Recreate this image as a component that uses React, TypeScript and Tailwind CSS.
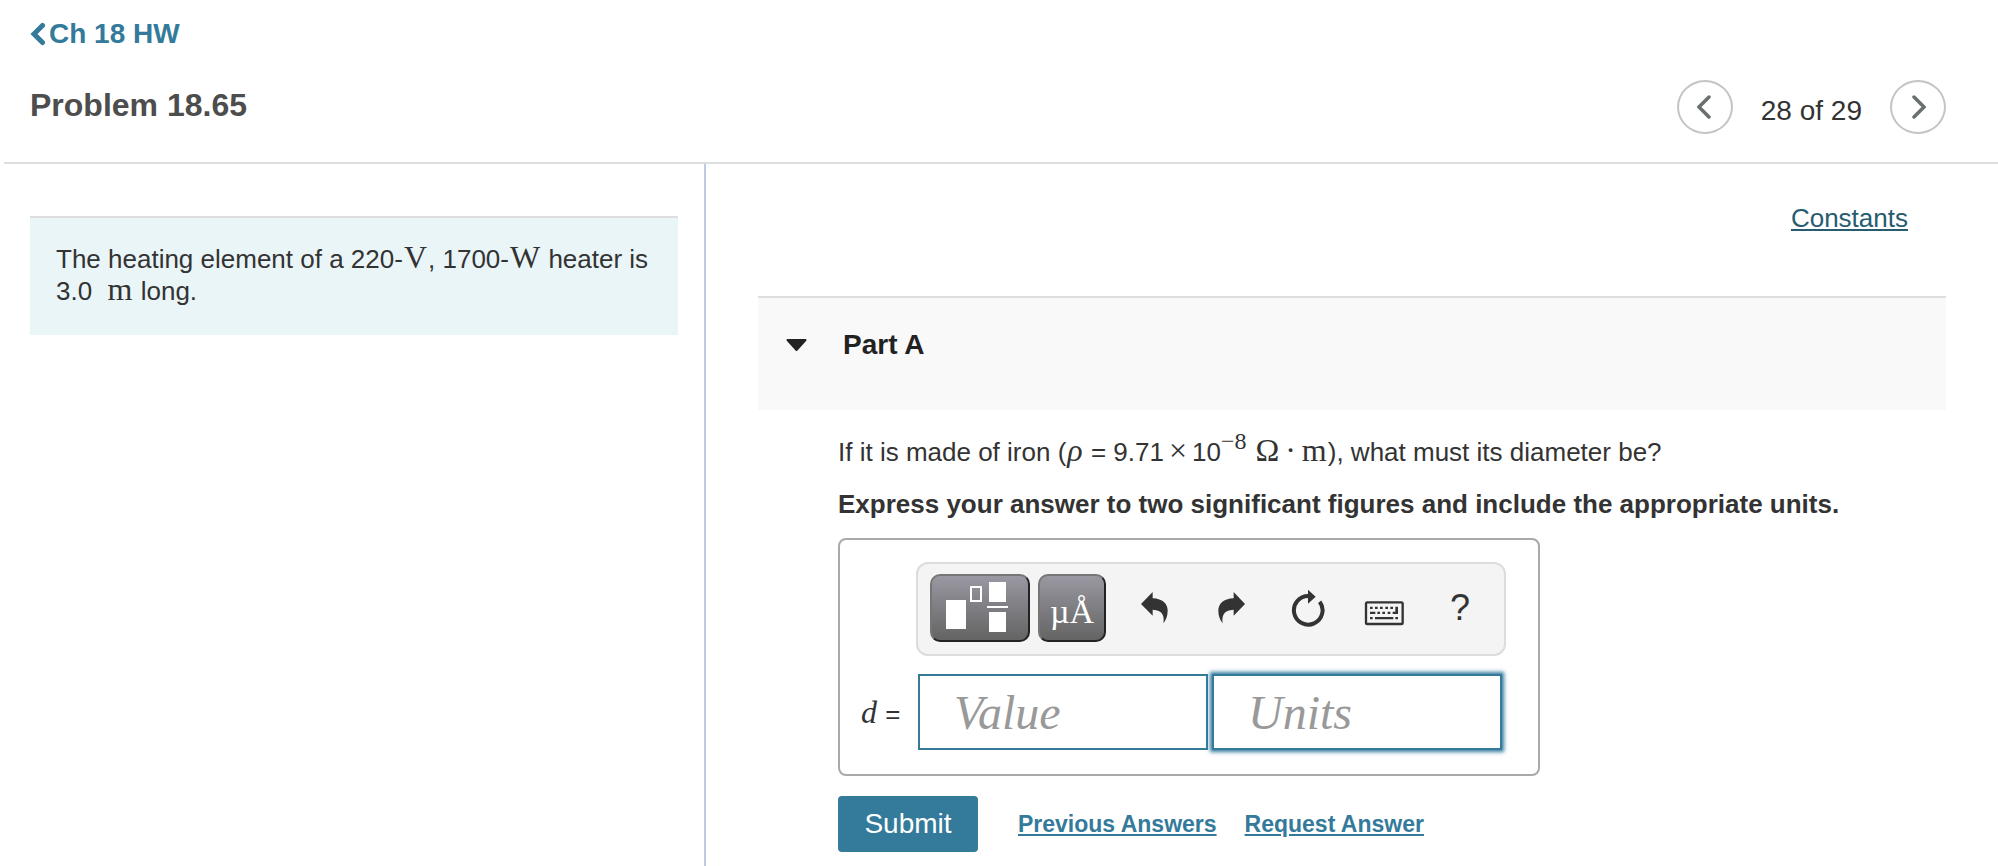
import type { ReactNode } from "react";

const Tex = ({ children }: { children: ReactNode }) => (
  <span className="mx-px font-['Liberation_Serif',serif] text-[32px] leading-[0]">{children}</span>
);

const ToolButton = ({ label, children }: { label: string; children: ReactNode }) => (
  <button type="button" aria-label={label} className="flex h-[68px] w-[76px] items-center justify-center text-[#333]">
    {children}
  </button>
);

const UndoIcon = () => (
  <svg viewBox="0 0 132 120" className="h-10 w-11" fill="currentColor">
    <path d="M27 48 62 12V31C92 32 107 48 107 68C107 84 102 95 94 106C98 84 92 66 62 65V83Z" />
  </svg>
);

const RedoIcon = () => (
  <svg viewBox="0 0 132 120" className="h-10 w-11" fill="currentColor">
    <path d="M111 48 77 12V31C46 32 31 48 31 68C31 84 36 95 44 106C41 84 46 66 77 65V83Z" />
  </svg>
);

const ResetIcon = () => (
  <svg viewBox="0 0 132 120" className="h-10 w-11">
    <path d="M74 24A43 43 0 1 0 107 41" fill="none" stroke="currentColor" strokeWidth="12" />
    <path d="M72 5 95 26 72 47Z" fill="currentColor" />
  </svg>
);

const KeyboardIcon = () => (
  <svg viewBox="0 0 132 120" className="h-10 w-11" fill="currentColor">
    <rect x="18" y="43" width="110" height="65" rx="4" fill="none" stroke="currentColor" strokeWidth="7" />
    <path d="M30 56h8v7h-8zM45 56h8v7h-8zM60 56h8v7h-8zM76 56h8v7h-8zM91 56h8v7h-8z" />
    <path d="M106 56h8v22h-16v-7h8z" />
    <path d="M30 71h16v7h-16zM52 71h8v7h-8zM67 71h8v7h-8zM83 71h8v7h-8z" />
    <path d="M30 87h8v7h-8zM45 87h55v7h-55zM106 87h8v7h-8z" />
  </svg>
);

const Header = () => (
  <header className="ml-1 flex items-end justify-between border-b-2 border-[#dedede] pt-4 pr-[52px] pb-7 pl-[26px]">
    <div className="pb-2">
      <a href="#hw" className="flex items-center gap-1 text-[28px] leading-9 font-bold text-[#337a9b]">
        <svg viewBox="0 0 15 24" className="h-6 w-[15px]" fill="none" stroke="currentColor" strokeWidth="5" strokeLinecap="round">
          <path d="M12.500 3.500 4 12 12.500 20.500" />
        </svg>
        Ch 18 HW
      </a>
      <h1 className="mt-8 text-[32px] leading-[42px] font-bold text-[#4d4d4d]">Problem 18.65</h1>
    </div>
    <nav className="flex items-center gap-7">
      <button
        type="button"
        aria-label="Previous item"
        className="flex h-[54px] w-14 items-center justify-center rounded-[50%] border-2 border-[#c4c4c4] pr-0.5 text-[#6a706e]"
      >
        <svg viewBox="0 0 14 24" className="h-6 w-3.5" fill="none" stroke="currentColor" strokeWidth="3.500" strokeLinecap="round">
          <path d="M12 2 2 12 12 22" />
        </svg>
      </button>
      <span className="pt-2 text-[28px] leading-9 text-[#333]">28 of 29</span>
      <button
        type="button"
        aria-label="Next item"
        className="flex h-[54px] w-14 items-center justify-center rounded-[50%] border-2 border-[#c4c4c4] pl-0.5 text-[#6a706e]"
      >
        <svg viewBox="0 0 14 24" className="h-6 w-3.5" fill="none" stroke="currentColor" strokeWidth="3.500" strokeLinecap="round">
          <path d="M2 2 12 12 2 22" />
        </svg>
      </button>
    </nav>
  </header>
);

const Toolbar = () => (
  <div className="ml-[76px] flex rounded-xl border-2 border-[#dcdcdc] bg-[#f4f4f4] pt-2.5 pb-3 pl-3">
    <button
      type="button"
      aria-label="Templates"
      className="h-[68px] w-[100px] rounded-[10px] border-2 border-t-[#767676] border-r-[#222] border-b-[#222] border-l-[#767676] bg-linear-to-b from-[#9a98a2] to-[#646464]"
    >
      <svg viewBox="2 2 96 64" className="h-16 w-24" fill="white">
        <rect x="16" y="26" width="20" height="29" />
        <rect x="41" y="13" width="10" height="14" fill="none" stroke="white" strokeWidth="2" />
        <rect x="59" y="8" width="17" height="20" />
        <rect x="57" y="32" width="21" height="2" />
        <rect x="59" y="38" width="17" height="20" />
      </svg>
    </button>
    <button
      type="button"
      aria-label="Units and symbols"
      className="ml-2 h-[68px] w-[68px] rounded-[10px] border-2 border-t-[#767676] border-r-[#222] border-b-[#222] border-l-[#767676] bg-linear-to-b from-[#9a98a2] to-[#646464] pt-2 font-['Liberation_Serif',serif] text-[34px] leading-none text-white"
    >
      µÅ
    </button>
    <div className="ml-2.5 flex">
      <ToolButton label="Undo"><UndoIcon /></ToolButton>
      <ToolButton label="Redo"><RedoIcon /></ToolButton>
      <ToolButton label="Reset"><ResetIcon /></ToolButton>
      <ToolButton label="Keyboard shortcuts"><KeyboardIcon /></ToolButton>
      <ToolButton label="Help"><span className="pl-1 text-[36px] leading-none">?</span></ToolButton>
    </div>
  </div>
);

const AnswerBox = () => (
  <div className="mt-4 w-[702px] max-w-full rounded-lg border-2 border-[#a9a9a9] pt-[22px] pr-8 pb-6">
    <Toolbar />
    <div className="mt-[18px] flex items-center">
      <label htmlFor="value" className="w-[78px] pt-1 pl-[21px] text-[26px] text-[#333]">
        <i className="mr-px font-['Liberation_Serif',serif] text-[32px] leading-none">d</i> =
      </label>
      <input
        id="value"
        placeholder="Value"
        className="h-[76px] w-[290px] border-2 border-[#337a9b] pl-[34px] font-['Liberation_Serif',serif] text-[48px] italic outline-none placeholder:text-[#999]"
      />
      <input
        aria-label="Units"
        placeholder="Units"
        className="ml-1 h-[76px] w-[290px] border-2 border-[#337a9b] pl-[34px] font-['Liberation_Serif',serif] text-[48px] italic shadow-[0_0_4px_2px_#337a9b] outline-none placeholder:text-[#999]"
      />
    </div>
  </div>
);

const PartA = () => (
  <section>
    <h2 className="flex h-[114px] items-start border-t-2 border-[#dedede] bg-[#f9f9f9] pt-7 pl-7 text-[28px] leading-[38px] font-bold text-[#222]">
      <button type="button" aria-expanded="true" className="flex items-center gap-9">
        <svg viewBox="0 0 21 12" className="h-3 w-[21px]" fill="currentColor">
          <path d="M1 0H20Q21 1 20 2L11.500 11.500Q10.500 12.500 9.500 11.500L1 2Q0 1 1 0Z" />
        </svg>
        Part A
      </button>
    </h2>
    <div className="pl-20 text-[26px] leading-9 text-[#333]">
      <p className="mt-6">
        If it is made of iron (<Tex><i>ρ</i></Tex> = 9.71
        <span className="mx-1"><Tex>×</Tex></span>10
        <sup className="top-[-12px] font-['Liberation_Serif',serif] text-[24px]">−8</sup>
        <Tex>&nbsp;Ω</Tex>
        <span className="mx-1"><Tex>·</Tex></span>
        <Tex>m</Tex>), what must its diameter be?
      </p>
      <p className="mt-4 font-bold">
        Express your answer to two significant figures and include the appropriate units.
      </p>
      <AnswerBox />
      <div className="mt-5 flex items-center">
        <button type="button" className="h-14 w-[140px] rounded bg-[#337a9b] text-[28px] text-white">
          Submit
        </button>
        <a href="#previous" className="ml-10 text-[23px] font-bold text-[#337a9b] underline">
          Previous Answers
        </a>
        <a href="#request" className="ml-7 text-[23px] font-bold text-[#337a9b] underline">
          Request Answer
        </a>
      </div>
    </div>
  </section>
);

export default function App() {
  return (
    <div className="flex min-h-screen flex-col bg-white font-['Liberation_Sans',Arial,sans-serif]">
      <Header />
      <main className="grid flex-1 grid-cols-[706fr_1292fr]">
        <aside className="border-r-2 border-[#bccbdd] pt-[52px] pr-[26px] pl-[30px]">
          <p className="border-t-2 border-[#dedede] bg-[#eaf5f8] px-[26px] pt-[25px] pb-7 text-[26px] leading-8 text-[#333]">
            The heating element of a 220-<Tex>V</Tex>, 1700-<Tex>W</Tex> heater is 3.0 &nbsp;<Tex>m</Tex> long.
          </p>
        </aside>
        <div className="px-[52px] pt-9">
          <div className="mb-15 pr-[38px] text-right text-[26px] leading-9">
            <a href="#constants" className="text-[#255c70] underline">Constants</a>
          </div>
          <PartA />
        </div>
      </main>
    </div>
  );
}
